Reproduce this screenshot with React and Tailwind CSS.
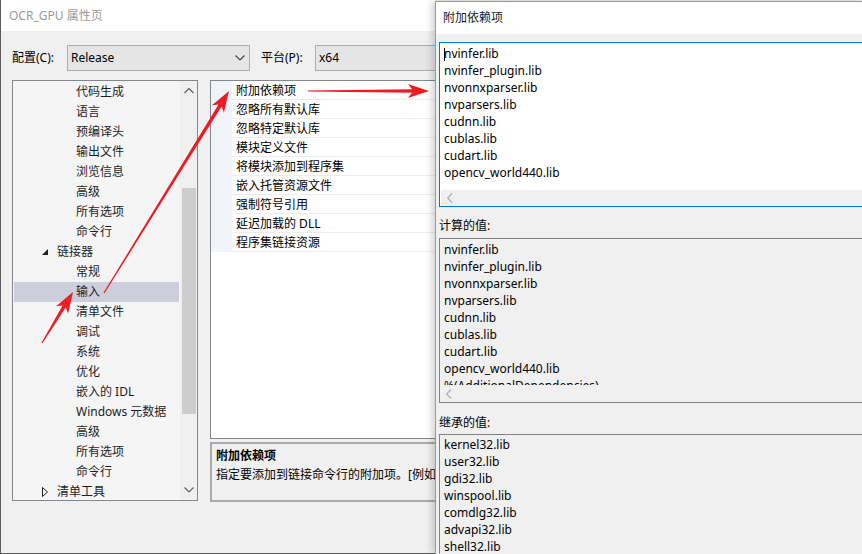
import React from 'react'

const treeRows = [
  { t: '代码生成', lvl: 2 },
  { t: '语言', lvl: 2 },
  { t: '预编译头', lvl: 2 },
  { t: '输出文件', lvl: 2 },
  { t: '浏览信息', lvl: 2 },
  { t: '高级', lvl: 2 },
  { t: '所有选项', lvl: 2 },
  { t: '命令行', lvl: 2 },
  { t: '链接器', lvl: 1, open: true },
  { t: '常规', lvl: 2 },
  { t: '输入', lvl: 2, selected: true },
  { t: '清单文件', lvl: 2 },
  { t: '调试', lvl: 2 },
  { t: '系统', lvl: 2 },
  { t: '优化', lvl: 2 },
  { t: '嵌入的 IDL', lvl: 2 },
  { t: 'Windows 元数据', lvl: 2 },
  { t: '高级', lvl: 2 },
  { t: '所有选项', lvl: 2 },
  { t: '命令行', lvl: 2 },
  { t: '清单工具', lvl: 1, open: false },
]

const props = [
  '附加依赖项',
  '忽略所有默认库',
  '忽略特定默认库',
  '模块定义文件',
  '将模块添加到程序集',
  '嵌入托管资源文件',
  '强制符号引用',
  '延迟加载的 DLL',
  '程序集链接资源',
]

const libs = [
  'nvinfer.lib',
  'nvinfer_plugin.lib',
  'nvonnxparser.lib',
  'nvparsers.lib',
  'cudnn.lib',
  'cublas.lib',
  'cudart.lib',
  'opencv_world440.lib',
]

const inherited = [
  'kernel32.lib',
  'user32.lib',
  'gdi32.lib',
  'winspool.lib',
  'comdlg32.lib',
  'advapi32.lib',
  'shell32.lib',
]

function Chevron({ dir = 'down', color = '#444' }) {
  const pts = {
    down: '0.5,0.5 5,5 9.5,0.5',
    up: '0.5,5 5,0.5 9.5,5',
  }[dir]
  return (
    <svg width="10" height="6" viewBox="0 0 10 6">
      <polyline points={pts} fill="none" stroke={color} strokeWidth="1.2" />
    </svg>
  )
}

function LeftChevron() {
  return (
    <svg width="6" height="10" viewBox="0 0 6 10">
      <polyline points="5,0.5 0.8,5 5,9.5" fill="none" stroke="#b4b4b4" strokeWidth="1.4" />
    </svg>
  )
}

function Arrow({ x1, y1, x2, y2 }) {
  const dx = x2 - x1
  const dy = y2 - y1
  const len = Math.hypot(dx, dy)
  const ux = dx / len
  const uy = dy / len
  const nx = -uy
  const ny = ux
  const head = 21
  const hw = 7
  const bx = x2 - ux * head
  const by = y2 - uy * head
  const cx = x2 - ux * (head - 4)
  const cy = y2 - uy * (head - 4)
  const p = (x, y) => `${x.toFixed(1)},${y.toFixed(1)}`
  const pts = [
    p(x1 + nx * 0.6, y1 + ny * 0.6),
    p(cx + nx * 1.8, cy + ny * 1.8),
    p(bx + nx * hw, by + ny * hw),
    p(x2, y2),
    p(bx - nx * hw, by - ny * hw),
    p(cx - nx * 1.8, cy - ny * 1.8),
    p(x1 - nx * 0.6, y1 - ny * 0.6),
  ].join(' ')
  return <polygon points={pts} fill="#ec1c24" />
}

function ListBox({ items, blue, extra }) {
  return (
    <div
      className={
        'w-[440px] h-[165px] flex flex-col border ' +
        (blue ? 'border-[#0078d7] bg-white' : 'border-[#828282] bg-[#f0f0f0]')
      }
    >
      <div className={'overflow-hidden pl-[4px] ' + (blue ? 'h-[147px] pt-[2px]' : 'h-[146px] pt-[2px]')}>
        {items.map((l, i) => (
          <div key={i} className="h-[17px] leading-[17px] whitespace-nowrap relative">
            {blue && i === 0 && (
              <span className="absolute left-0 top-[3px] w-px h-[13px] bg-black" />
            )}
            {l}
          </div>
        ))}
        {extra && <div className="h-[17px] leading-[17px] whitespace-nowrap">{extra}</div>}
      </div>
      <div className={'bg-[#f0f0f0] flex items-center pl-[6px] ' + (blue ? 'h-[16px] ml-px' : 'h-[17px]')}>
        <LeftChevron />
      </div>
    </div>
  )
}

export default function App() {
  return (
    <div className="relative w-[862px] h-[554px] overflow-hidden flex bg-[#f0f0f0] text-[12px] text-black font-['Noto_Sans','Noto_Sans_CJK_SC',sans-serif]">
      {/* property pages window */}
      <div className="w-[435px] h-[554px] shrink-0 flex flex-col border-l border-b border-[#5c5c5c] overflow-hidden">
        <div className="h-[31px] shrink-0 bg-white flex items-center pl-[8px] text-[#9a9a9a]">
          OCR_GPU 属性页
        </div>

        <div className="flex items-center h-[26px] mt-[14px] pl-[11px] shrink-0">
          <span className="w-[55px] shrink-0 whitespace-nowrap">配置(C):</span>
          <div className="w-[183px] h-[26px] shrink-0 border border-[#adadad] bg-[#e5e5e5] flex items-center justify-between pl-[3px] pr-[4px]">
            <span>Release</span>
            <Chevron />
          </div>
          <span className="w-[54px] ml-[11px] shrink-0 whitespace-nowrap">平台(P):</span>
          <div className="w-[140px] h-[26px] shrink-0 border border-[#adadad] bg-[#e5e5e5] flex items-center pl-[3px]">
            x64
          </div>
        </div>

        <div className="flex mt-[9px] pl-[11px]">
          {/* tree */}
          <div className="w-[186px] h-[421px] shrink-0 border border-[#828790] bg-[#f5f5f5] flex">
            <div className="flex-1 pt-px">
              {treeRows.map((r, i) => (
                <div
                  key={i}
                  className={
                    'h-[20px] leading-[20px] flex items-center whitespace-nowrap text-[#1e1e1e] ' +
                    (r.selected ? 'bg-[#cccedb] mx-px' : '')
                  }
                >
                  {r.lvl === 2 ? (
                    <span className={r.selected ? 'pl-[62px]' : 'pl-[63px]'}>{r.t}</span>
                  ) : (
                    <>
                      <span className="ml-[29px] w-[15px] flex items-center">
                        {r.open ? (
                          <svg width="6" height="6" viewBox="0 0 6 6">
                            <polygon points="6,0 6,6 0,6" fill="#1e1e1e" />
                          </svg>
                        ) : (
                          <svg width="6" height="10" viewBox="0 0 6 10">
                            <polygon points="0.5,0.5 5.5,5 0.5,9.5" fill="none" stroke="#1e1e1e" strokeWidth="1" />
                          </svg>
                        )}
                      </span>
                      <span>{r.t}</span>
                    </>
                  )}
                </div>
              ))}
            </div>
            <div className="w-[17px] bg-[#f0f0f0] flex flex-col items-center">
              <div className="h-[20px] flex items-center">
                <Chevron dir="up" color="#606060" />
              </div>
              <div className="w-[14px] h-[226px] mt-[87px] bg-[#cdcdcd]" />
              <div className="flex-1" />
              <div className="h-[20px] flex items-center">
                <Chevron color="#606060" />
              </div>
            </div>
          </div>

          {/* property grid + description */}
          <div className="w-[240px] shrink-0 ml-[12px] flex flex-col">
            <div className="h-[359px] border border-[#828790] bg-white">
              {props.map((p, i) => (
                <div key={i} className="flex h-[19px]">
                  <div className="w-[21px] bg-[#f0f4fa]" />
                  <div className="flex-1 border-b border-[#ececec] pl-[4px] pt-px leading-[18px] whitespace-nowrap">
                    {p}
                  </div>
                </div>
              ))}
            </div>
            <div className="h-[60px] mt-[3px] border-2 border-[#a9a9a9] bg-[#f0f0f0] pl-[4px] pt-[2px] whitespace-nowrap">
              <div className="h-[19px] leading-[19px] font-bold">附加依赖项</div>
              <div className="h-[19px] leading-[19px]">指定要添加到链接命令行的附加项。[例如</div>
            </div>
          </div>
        </div>
      </div>

      {/* additional dependencies dialog */}
      <div className="relative flex-1 h-[553px] mt-px flex flex-col border-l border-t border-[#9a9a9a] bg-[#f0f0f0] overflow-hidden shadow-[-3px_0_7px_rgba(0,0,0,0.18)]">
        <div className="h-[32px] shrink-0 bg-white flex items-center pl-[7px] text-[#1a1a1a]">附加依赖项</div>
        <div className="pl-[3px] flex flex-col">
          <div className="mt-[8px]">
            <ListBox items={libs} blue />
          </div>
          <div className="mt-[10px] h-[17px] leading-[17px]">计算的值:</div>
          <div className="mt-[4px]">
            <ListBox items={libs} extra="%(AdditionalDependencies)" />
          </div>
          <div className="mt-[11px] h-[17px] leading-[17px]">继承的值:</div>
          <div className="mt-[3px] w-[440px] h-[200px] border border-[#828282] bg-[#f0f0f0] pl-[4px] pt-[1px]">
            {inherited.map((l, i) => (
              <div key={i} className="h-[17px] leading-[17px] whitespace-nowrap">
                {l}
              </div>
            ))}
          </div>
        </div>
      </div>

      {/* annotation arrows */}
      <svg className="absolute inset-0 pointer-events-none" width="862" height="554">
        <Arrow x1={42} y1={343} x2={73} y2={292} />
        <Arrow x1={104} y1={293} x2={229} y2={91} />
        <Arrow x1={308} y1={91} x2={429} y2={91} />
      </svg>
    </div>
  )
}
